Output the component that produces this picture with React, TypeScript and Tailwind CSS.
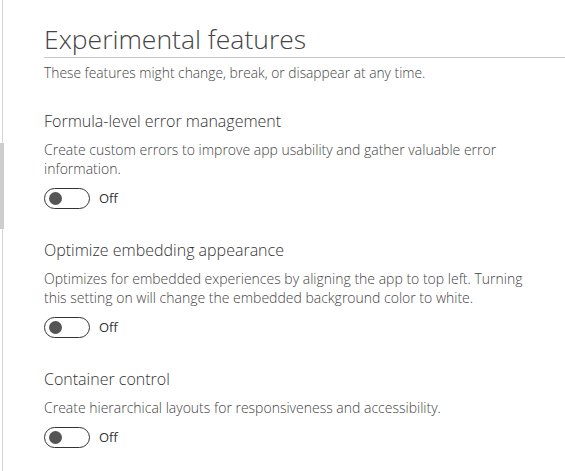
import React from "react";

const font = { fontFamily: '"Open Sans", "Noto Sans", sans-serif' };

function Toggle() {
  return (
    <div className="flex items-center gap-[9px] mt-[10px]">
      <div className="w-[46px] h-[21px] rounded-full border border-[#333] flex items-center pl-[4px]">
        <div className="w-[13px] h-[13px] rounded-full bg-[#555]" />
      </div>
      <span className="text-[13px] text-[#333]">Off</span>
    </div>
  );
}

function Feature({ title, desc, first }: { title: string; desc: string; first?: boolean }) {
  return (
    <div className={first ? "mt-[28px]" : "mt-[30px]"}>
      <div className="text-[16px] leading-[22px] text-[#333] font-light">{title}</div>
      <div className="mt-[8px] text-[14px] leading-[19px] text-[#444] font-light w-[500px]">{desc}</div>
      <Toggle />
    </div>
  );
}

export default function App() {
  return (
    <div className="w-[565px] h-[471px] bg-white overflow-hidden relative pl-[2px]" style={font}>
      <div className="h-full border-l border-[#d6d6d6] pl-[41px] pt-[22px]">
        <div className="text-[26.5px] leading-[34px] text-[#444] font-light border-b border-[#c8c8c8] pb-[1px]">
          Experimental features
        </div>
        <div className="mt-[6px] text-[13.8px] leading-[18px] text-[#444] font-light">
          These features might change, break, or disappear at any time.
        </div>
        <Feature
          first
          title="Formula-level error management"
          desc="Create custom errors to improve app usability and gather valuable error information."
        />
        <Feature
          title="Optimize embedding appearance"
          desc="Optimizes for embedded experiences by aligning the app to top left. Turning this setting on will change the embedded background color to white."
        />
        <Feature
          title="Container control"
          desc="Create hierarchical layouts for responsiveness and accessibility."
        />
      </div>
      <div className="absolute left-0 top-[143px] w-[4px] h-[86px] bg-[#cdcdcd]" />
    </div>
  );
}
